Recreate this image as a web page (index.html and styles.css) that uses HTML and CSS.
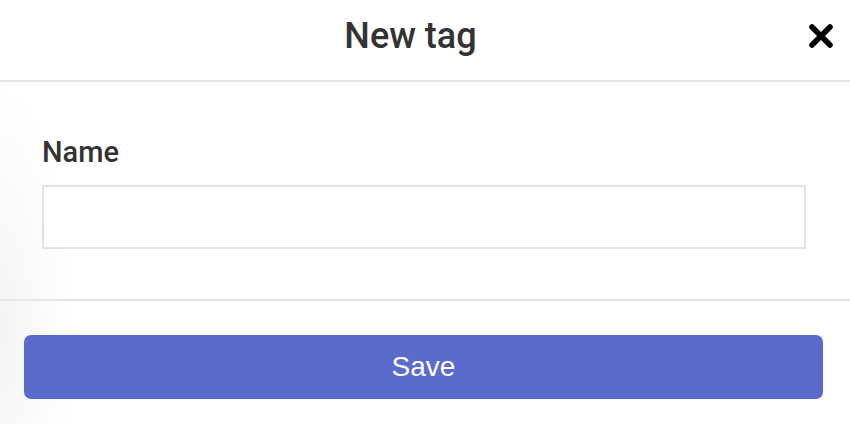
FILE: index.html
```html
<!DOCTYPE html>
<html lang="en">
<head>
<meta charset="utf-8">
<title>New tag</title>
<link rel="stylesheet" href="styles.css">
</head>
<body>
<div class="dialog">
  <header class="dialog-header">
    <h1 class="dialog-title">New tag</h1>
    <button class="close-btn" type="button" aria-label="Close">
      <svg width="26" height="26" viewBox="0 0 26 26" aria-hidden="true">
        <path d="M4 4 L22 22 M22 4 L4 22" stroke="#000" stroke-width="5.6" stroke-linecap="round" fill="none"/>
      </svg>
    </button>
  </header>
  <main class="dialog-body">
    <label class="field-label" for="tag-name">Name</label>
    <input class="field-input" id="tag-name" type="text">
  </main>
  <footer class="dialog-footer">
    <button class="save-btn" type="button">Save</button>
  </footer>
</div>
</body>
</html>
```

FILE: styles.css
```css
html, body {
  margin: 0;
  padding: 0;
  background: #fff;
}

body {
  font-family: "Liberation Sans", Arial, sans-serif;
  color: #333;
  width: 850px;
  height: 424px;
  overflow: hidden;
}

.dialog {
  display: flex;
  flex-direction: column;
  height: 424px;
  background: radial-gradient(ellipse 70px 240px at 0 330px, #f4f4f4, rgba(255,255,255,0) 100%), #fff;
}

.dialog-header {
  position: relative;
  height: 81px;
  border-bottom: 2px solid #e6e6e6;
  display: flex;
  align-items: center;
  justify-content: center;
  padding-right: 29px;
  background: #fff;
}

.dialog-title {
  margin: 0;
  font-family: Roboto, "Liberation Sans", sans-serif;
  font-weight: 500;
  font-size: 36px;
  color: #333;
  padding-bottom: 8px;
}

.close-btn {
  position: absolute;
  right: 16px;
  top: 23px;
  width: 26px;
  height: 26px;
  padding: 0;
  border: 0;
  background: none;
  display: flex;
}

.dialog-body {
  display: flex;
  flex-direction: column;
  padding: 53px 44px 50px 42px;
}

.field-label {
  font-family: Roboto, "Liberation Sans", sans-serif;
  font-weight: 500;
  font-size: 29px;
  line-height: 34px;
  color: #333;
  margin-bottom: 16px;
}

.field-input {
  box-sizing: border-box;
  height: 64px;
  width: 100%;
  border: 2px solid #e2e2e2;
  border-radius: 1px;
  background: #fff;
  font-size: 24px;
  padding: 0 12px;
  outline: none;
}

.dialog-footer {
  border-top: 2px solid #e6e6e6;
  padding: 34px 27px 25px 24px;
}

.save-btn {
  display: block;
  width: 100%;
  height: 64px;
  border: 0;
  border-radius: 7px;
  background: #5a6bcd;
  color: #fff;
  font-family: "Liberation Sans", Arial, sans-serif;
  font-size: 28px;
  padding: 0;
}
```
